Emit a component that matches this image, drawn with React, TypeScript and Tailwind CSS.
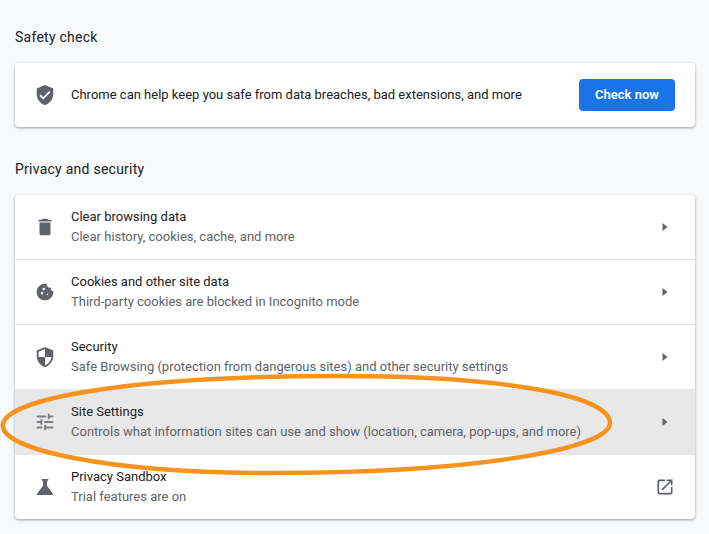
const rows = [
  {
    title: 'Clear browsing data',
    sub: 'Clear history, cookies, cache, and more',
    icon: 'M6 19c0 1.1.9 2 2 2h8c1.1 0 2-.9 2-2V7H6v12zM19 4h-3.5l-1-1h-5l-1 1H5v2h14V4z',
    iconClass: 'h-[22px] w-[22px] text-[#5f6368]',
  },
  {
    title: 'Cookies and other site data',
    sub: 'Third-party cookies are blocked in Incognito mode',
    icon: 'M21.95 10.99c-1.79-.03-3.7-1.95-2.68-4.22-2.98 1-5.77-1.59-5.19-4.56C6.95.71 2 6.58 2 12c0 5.52 4.48 10 10 10 5.89 0 10.54-5.08 9.95-11.01zM8.5 15c-.83 0-1.5-.67-1.5-1.5S7.67 12 8.5 12s1.5.67 1.5 1.5S9.33 15 8.5 15zm2-5C9.67 10 9 9.33 9 8.5S9.67 7 10.5 7s1.5.67 1.5 1.5-.67 1.5-1.5 1.5zm4.5 6c-.55 0-1-.45-1-1s.45-1 1-1 1 .45 1 1-.45 1-1 1z',
    iconClass: 'h-[20px] w-[20px] ml-[1px] text-[#5f6368]',
  },
  {
    title: 'Security',
    sub: 'Safe Browsing (protection from dangerous sites) and other security settings',
    icon: 'M12 1L3 5v6c0 5.55 3.84 10.74 9 12 5.16-1.26 9-6.45 9-12V5l-9-4zm0 10.99h7c-.53 4.12-3.28 7.79-7 8.94V12H5V6.3l7-3.11v8.8z',
    iconClass: 'h-[22px] w-[22px] text-[#5f6368]',
  },
  {
    title: 'Site Settings',
    sub: 'Controls what information sites can use and show (location, camera, pop-ups, and more)',
    icon: 'M3 17v2h6v-2H3zM3 5v2h10V5H3zm10 16v-2h8v-2h-8v-2h-2v6h2zM7 9v2H3v2h4v2h2V9H7zm14 4v-2H11v2h10zm-6-4h2V7h4V5h-4V3h-2v6z',
    iconClass: 'h-[22px] w-[22px] text-[#7a7e84]',
    active: true,
  },
  {
    title: 'Privacy Sandbox',
    sub: 'Trial features are on',
    icon: 'M19.8 18.4L14 10.67V6.5l1.35-1.69c.26-.33.03-.81-.39-.81H9.04c-.42 0-.65.48-.39.81L10 6.5v4.17L4.2 18.4c-.49.66-.02 1.6.8 1.6h14c.82 0 1.29-.94.8-1.6z',
    iconClass: 'h-[24px] w-[24px] -ml-[1px] text-[#5f6368]',
    external: true,
  },
];

function Icon({ d, className }: { d: string; className?: string }) {
  return (
    <svg viewBox="0 0 24 24" className={className} fill="currentColor">
      <path d={d} />
    </svg>
  );
}

function Row({ row, first }: { row: (typeof rows)[number]; first: boolean }) {
  return (
    <div
      className={`flex items-center pl-[19px] pr-[20px] ${first ? 'h-[64px]' : 'h-[65px] border-t border-[#e4e5e6]'} ${row.active ? 'bg-[#e8e8e9]' : ''}`}
    >
      <div className="flex w-[37px] shrink-0">
        <Icon d={row.icon} className={row.iconClass} />
      </div>
      <div className="min-w-0 flex-1">
        <div className="text-[13px] leading-[20px] text-[#202124]">{row.title}</div>
        <div className="text-[13px] leading-[20px] text-[#5f6368]">{row.sub}</div>
      </div>
      {row.external ? (
        <Icon
          d="M19 19H5V5h7V3H5c-1.11 0-2 .9-2 2v14c0 1.1.89 2 2 2h14c1.1 0 2-.9 2-2v-7h-2v7zM14 3v2h3.59l-9.83 9.83 1.41 1.41L19 6.41V10h2V3h-7z"
          className="h-[20px] w-[20px] text-[#5f6368]"
        />
      ) : (
        <svg viewBox="0 0 6 8" className="mr-[7px] h-[8px] w-[6px] text-[#5f6368]" fill="currentColor">
          <path d="M0.5 0L5.5 4L0.5 8z" />
        </svg>
      )}
    </div>
  );
}

export default function App() {
  return (
    <div className="relative h-[534px] w-[709px] overflow-hidden bg-[#f8f9fa] pl-[15px] pt-[27px] font-['Roboto',sans-serif]">
      <h2 className="text-[14px] leading-[20px] tracking-[0.25px] text-[#202124]">Safety check</h2>
      <div className="mt-[16px] flex h-[64px] w-[680px] items-center rounded bg-white pl-[19px] pr-[20px] shadow-[0_1px_2px_rgba(60,64,67,0.35),0_1px_3px_1px_rgba(60,64,67,0.12)]">
        <div className="flex w-[37px] shrink-0">
          <Icon
            d="M12 1L3 5v6c0 5.55 3.84 10.74 9 12 5.16-1.26 9-6.45 9-12V5l-9-4zm-2 16l-4-4 1.41-1.41L10 14.17l6.59-6.59L18 9l-8 8z"
            className="h-[22px] w-[22px] text-[#5f6368]"
          />
        </div>
        <div className="flex-1 text-[13px] text-[#202124]">
          Chrome can help keep you safe from data breaches, bad extensions, and more
        </div>
        <button className="h-[32px] w-[96px] rounded bg-[#1a73e8] text-[13px] font-semibold text-white">Check now</button>
      </div>
      <h2 className="mt-[32px] text-[14px] leading-[20px] tracking-[0.25px] text-[#202124]">Privacy and security</h2>
      <div className="mt-[16px] w-[680px] overflow-hidden rounded bg-white shadow-[0_1px_2px_rgba(60,64,67,0.35),0_1px_3px_1px_rgba(60,64,67,0.12)]">
        {rows.map((row, i) => (
          <Row key={row.title} row={row} first={i === 0} />
        ))}
      </div>
      {/* hand drawn marker round the Site Settings row */}
      <svg viewBox="0 0 709 534" className="pointer-events-none absolute left-0 top-0 h-[534px] w-[709px]" fill="none">
        <path
          d="M3 424C7 400 120 376 340 376C500 376 610 395 610 423C610 448 480 473 270 473C110 473 -1 450 3 424Z"
          stroke="#f7931e"
          strokeWidth="4.5"
        />
      </svg>
    </div>
  );
}
